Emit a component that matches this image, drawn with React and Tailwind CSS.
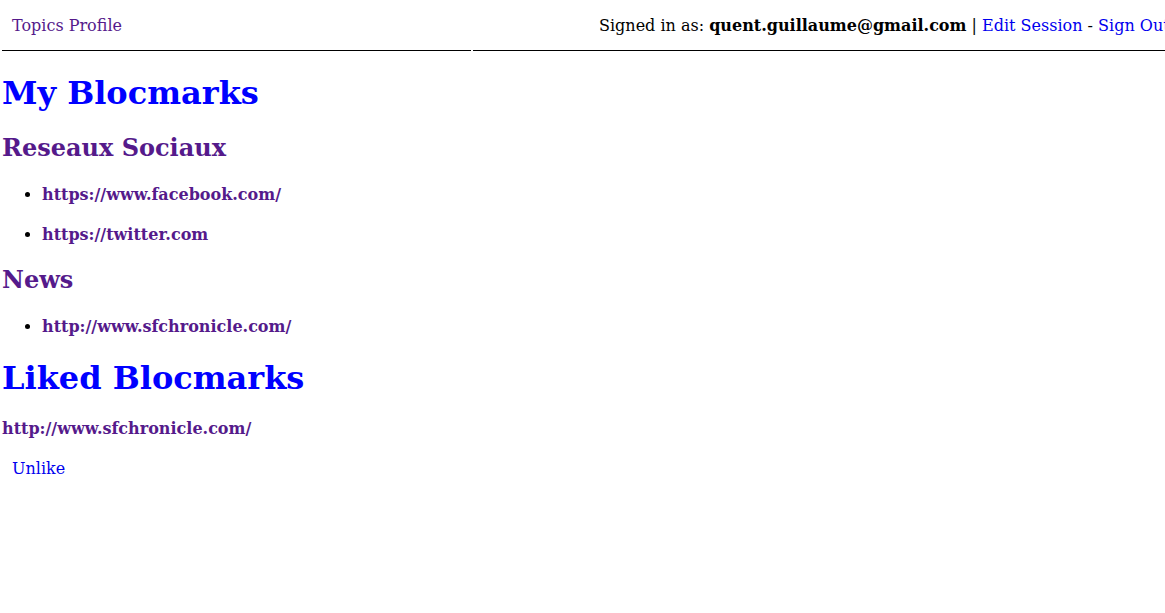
import React from "react";

const myBlocmarks = [
  { topic: "Reseaux Sociaux", links: ["https://www.facebook.com/", "https://twitter.com"] },
  { topic: "News", links: ["http://www.sfchronicle.com/"] },
];

export default function App() {
  return (
    <div className="min-h-[613px] w-[1165px] overflow-hidden bg-white pl-[2px] font-['DejaVu_Serif',serif] text-base leading-[normal] text-black">
      {/* top bar */}
      <nav className="flex whitespace-nowrap">
        <div className="w-[469px] shrink-0 border-b border-black px-[10px] pt-[16px] pb-[15px]">
          <a href="#" className="text-[#551a8b]">Topics Profile</a>
        </div>
        <div className="ml-[2px] w-[700px] shrink-0 border-b border-black pt-[16px] pb-[15px] pl-[126px]">
          Signed in as: <strong>quent.guillaume@gmail.com</strong> |{" "}
          <a href="#" className="text-[#0000ee]">Edit Session</a> -{" "}
          <a href="#" className="text-[#0000ee]">Sign Out</a>
        </div>
      </nav>

      <h1 className="mt-[22.5px] mb-[21.44px] text-[32px] leading-[normal] font-bold text-[#0000ff]">My Blocmarks</h1>
      {myBlocmarks.map((group) => (
        <div key={group.topic}>
          <h2 className="my-[19.92px] text-[24px] leading-[normal] font-bold text-[#551a8b]">{group.topic}</h2>
          <ul className="my-4 list-disc pl-10">
            {group.links.map((url, i) => (
              <li key={url}>
                <h4
                  className={
                    i === 0
                      ? "mt-[22.8px] mb-[21.28px] text-base leading-[normal] font-bold"
                      : "my-[21.28px] text-base leading-[normal] font-bold"
                  }
                >
                  <a href="#" className="text-[#551a8b]">{url}</a>
                </h4>
              </li>
            ))}
          </ul>
        </div>
      ))}

      <h1 className="mt-[22.5px] mb-[21.44px] text-[32px] leading-[normal] font-bold text-[#0000ff]">Liked Blocmarks</h1>
      <h4 className="mt-[22.5px] mb-[21.28px] text-base leading-[normal] font-bold">
        <a href="#" className="text-[#551a8b]">http://www.sfchronicle.com/</a>
      </h4>
      <div className="pl-[10px]">
        <a href="#" className="text-[#0000ee]">Unlike</a>
      </div>
    </div>
  );
}
